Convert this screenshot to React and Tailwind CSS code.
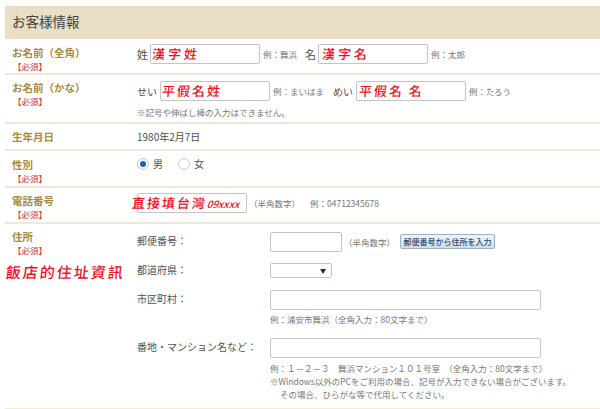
const jp = { fontFamily: '"Noto Sans CJK JP", "Liberation Sans", sans-serif' };

function Required() {
  return <div className="pl-[1px] text-[8.5px] leading-[12px] text-[#d9342b]">【必須】</div>;
}

function Row({ label, required = true, labelPad = '', className, children }) {
  return (
    <div className={`flex border-b-2 border-[#efe8da] ${className}`}>
      <div className={`w-[132px] shrink-0 pl-[7px] ${labelPad}`}>
        <div className="text-[10.5px] leading-[14px] font-bold text-[#a88b3c]">{label}</div>
        {required && <Required />}
      </div>
      <div className="min-w-0 flex-1">{children}</div>
    </div>
  );
}

function Hand({ children, className = '' }) {
  return (
    <span className={`inline-block -skew-x-6 font-medium whitespace-nowrap text-[#ee0f1c] ${className}`} style={{ fontFamily: '"Noto Sans CJK TC", sans-serif' }}>
      {children}
    </span>
  );
}

function Field({ w, children }) {
  return (
    <div className={`flex h-[20px] shrink-0 items-center overflow-visible rounded-[2px] border border-[#c4c4c4] bg-white pl-[1px] ${w}`}>
      {children}
    </div>
  );
}

export default function App() {
  return (
    <div className="h-[409px] w-[600px] overflow-hidden bg-white pt-[6px] pl-[5px] text-[#505050]" style={jp}>
      <div className="flex h-[33px] items-center bg-[#e8dfc4] pb-[2px] pl-[7px] text-[13.5px] text-[#444]">お客様情報</div>

      <Row label="お名前（全角）" labelPad="pt-[2px]" className="h-[36px] pt-[5px]">
        <div className="flex items-center text-[11px]">
          <span className="mr-[2px]">姓</span>
          <Field w="w-[110px]"><Hand className="text-[13px] tracking-[3px]">漢字姓</Hand></Field>
          <span className="ml-[3px] w-[39px] text-[8.5px] whitespace-nowrap text-[#777]">例：舞浜</span>
          <span className="ml-[3px] mr-[2px]">名</span>
          <Field w="w-[110px]"><Hand className="ml-[2px] text-[13px] tracking-[3px]">漢字名</Hand></Field>
          <span className="ml-[3px] text-[8.5px] whitespace-nowrap text-[#777]">例：太郎</span>
        </div>
      </Row>

      <Row label="お名前（かな）" className="h-[49px] pt-[6px]">
        <div className="flex items-center text-[10px]">
          <span className="mr-[3px] whitespace-nowrap">せい</span>
          <Field w="w-[110px]"><Hand className="text-[13px] tracking-[2px]">平假名姓</Hand></Field>
          <span className="ml-[3px] w-[52px] text-[8.5px] whitespace-nowrap text-[#777]">例：まいはま</span>
          <span className="ml-[8px] mr-[3px] whitespace-nowrap">めい</span>
          <Field w="w-[110px]"><Hand className="ml-[1px] text-[13px] tracking-[2px]">平假名 名</Hand></Field>
          <span className="ml-[3px] text-[8.5px] whitespace-nowrap text-[#777]">例：たろう</span>
        </div>
        <p className="mt-[5px] text-[8.5px] leading-[12px] text-[#777]">※記号や伸ばし棒の入力はできません。</p>
      </Row>

      <Row label="生年月日" required={false} className="h-[27px] pt-[6px]">
        <div className="text-[10px] leading-[14px]">1980年2月7日</div>
      </Row>

      <Row label="性別" labelPad="pt-[1px]" className="h-[37px] pt-[6px]">
        <div className="flex items-center text-[10px] leading-[14px]">
          <span className="flex h-[12px] w-[12px] items-center justify-center rounded-full border border-[#bfc8d2] bg-white">
            <span className="h-[6px] w-[6px] rounded-full bg-[#1e63a8]" />
          </span>
          <span className="ml-[4px]">男</span>
          <span className="ml-[15px] h-[12px] w-[12px] rounded-full border border-[#c4ccd6] bg-white" />
          <span className="ml-[4px]">女</span>
        </div>
      </Row>

      <Row label="電話番号" labelPad="pt-[1px]" className="h-[36px] pt-[5px]">
        <div className="flex items-center text-[8.5px] text-[#777]">
          <div className="flex h-[20px] w-[110px] shrink-0 items-center rounded-[2px] border border-[#c4c4c4] bg-white">
            <Hand className="-ml-[6px] text-[13px] tracking-[2px]">直接填台灣<span className="text-[10px] tracking-normal italic">09xxxx</span></Hand>
          </div>
          <span className="ml-[2px]">（半角数字）</span>
          <span className="ml-[10px]">例：04712345678</span>
        </div>
      </Row>

      <div className="flex h-[186px] border-b-2 border-[#f3ecd9] pt-[6px]">
        <div className="w-[132px] shrink-0 pl-[7px]">
          <div className="text-[10.5px] leading-[14px] font-bold text-[#a88b3c]">住所</div>
          <Required />
          <Hand className="mt-[7px] -ml-[6px] block text-[15px] leading-[18px] tracking-[2px]">飯店的住址資訊</Hand>
        </div>
        <div className="grid flex-1 grid-cols-[133px_1fr] content-start pt-[2px] text-[10px]">
          <div className="pt-[2px] leading-[14px]">郵便番号：</div>
          <div className="flex h-[31px] items-start text-[8.5px] text-[#777]">
            <div className="h-[20px] w-[72px] rounded-[2px] border border-[#c4c4c4]" />
            <span className="mt-[4px] ml-[2px]">（半角数字）</span>
            <button className="mt-[2px] ml-[5px] h-[15px] w-[95px] rounded-[2px] border border-[#9fb0c4] bg-linear-to-b from-[#eef4fb] to-[#cfdcec] text-[8px] leading-[13px] font-medium whitespace-nowrap text-[#2d4a6e]">郵便番号から住所を入力</button>
          </div>

          <div className="leading-[14px]">都道府県：</div>
          <div className="h-[27px]">
            <div className="flex h-[15px] w-[62px] items-center justify-end rounded-[2px] border border-[#c4c4c4] pr-[5px] text-[6px] text-[#222]">▼</div>
          </div>

          <div className="pt-[2px] leading-[14px]">市区町村：</div>
          <div className="h-[48px]">
            <div className="h-[20px] w-[271px] rounded-[2px] border border-[#c4c4c4]" />
            <p className="mt-[3px] text-[8.5px] leading-[12px] whitespace-nowrap text-[#777]">例：浦安市舞浜（全角入力：80文字まで）</p>
          </div>

          <div className="pt-[2px] leading-[14px] whitespace-nowrap">番地・マンション名など：</div>
          <div>
            <div className="h-[20px] w-[271px] rounded-[2px] border border-[#c4c4c4]" />
            <div className="mt-[4px] text-[8.5px] leading-[13px] whitespace-nowrap text-[#777]">
              <p>例：１－２－３　舞浜マンション１０１号室　（全角入力：80文字まで）</p>
              <p>※Windows以外のPCをご利用の場合、記号が入力できない場合がございます。</p>
              <p className="pl-[10px]">その場合、ひらがな等で代用してください。</p>
            </div>
          </div>
        </div>
      </div>
    </div>
  );
}
